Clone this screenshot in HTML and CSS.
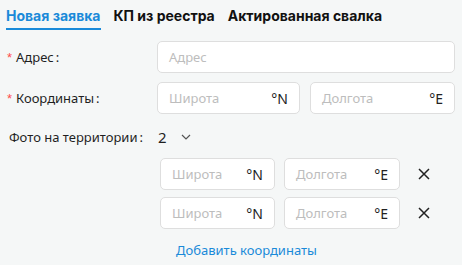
FILE: index.html
```html
<!DOCTYPE html>
<html lang="ru">
<head>
<meta charset="utf-8">
<link rel="stylesheet" href="styles.css">
</head>
<body>
<div class="page">
  <nav class="tabs">
    <span class="tab active">Новая заявка</span>
    <span class="tab">КП из реестра</span>
    <span class="tab">Актированная свалка</span>
  </nav>
  <form class="form">
    <div class="row">
      <label class="label"><span class="req">*</span>Адрес<span class="colon">:</span></label>
      <div class="field wide"><span class="ph">Адрес</span></div>
    </div>
    <div class="row">
      <label class="label"><span class="req">*</span>Координаты<span class="colon">:</span></label>
      <div class="pair">
        <div class="field"><span class="ph">Широта</span><span class="sfx">°N</span></div>
        <div class="field"><span class="ph">Долгота</span><span class="sfx">°E</span></div>
      </div>
    </div>
    <div class="row photo">
      <label class="label plain">Фото на территории<span class="colon">:</span></label>
      <div class="select"><span>2</span>
        <svg width="10" height="6" viewBox="0 0 10 6"><path d="M1 1l4 4 4-4" fill="none" stroke="#555" stroke-width="1.2"/></svg>
      </div>
    </div>
    <div class="sub">
      <div class="subrow">
        <div class="field s1"><span class="ph">Широта</span><span class="sfx">°N</span></div>
        <div class="field s2"><span class="ph">Долгота</span><span class="sfx">°E</span></div>
        <svg class="x" width="12" height="12" viewBox="0 0 12 12"><path d="M1 1l10 10M11 1L1 11" stroke="#222" stroke-width="1.5"/></svg>
      </div>
      <div class="subrow">
        <div class="field s1"><span class="ph">Широта</span><span class="sfx">°N</span></div>
        <div class="field s2"><span class="ph">Долгота</span><span class="sfx">°E</span></div>
        <svg class="x" width="12" height="12" viewBox="0 0 12 12"><path d="M1 1l10 10M11 1L1 11" stroke="#222" stroke-width="1.5"/></svg>
      </div>
      <a class="add">Добавить координаты</a>
    </div>
  </form>
</div>
</body>
</html>
```
FILE: styles.css
```css
html, body { margin: 0; padding: 0; }
body {
  background: #f5f7f7;
  width: 462px;
  height: 265px;
  overflow: hidden;
  font-family: "Noto Sans", "Open Sans", sans-serif;
  color: #1f1f1f;
}
.tabs {
  display: flex;
  gap: 13px;
  padding: 7px 0 0 6px;
  height: 34px;
  box-sizing: border-box;
}
.tab {
  font-family: Inter, Roboto, "Liberation Sans", sans-serif;
  font-weight: 700;
  font-size: 14px;
  color: #111;
  line-height: 18px;
  height: 21px;
}
.tab.active {
  color: #1a8ad9;
  border-bottom: 2px solid #1a8ad9;
}
.form { padding: 7px 7px 0 7px; }
.row {
  display: flex;
  align-items: center;
  height: 32px;
  margin-bottom: 9px;
}
.label {
  width: 150px;
  font-size: 13px;
  color: #1f1f1f;
  flex: none;
}
.colon { margin-left: 2px; }
.label.plain { width: auto; padding-left: 2px; }
.req { color: #ff4d4f; margin-right: 4px; font-family: "Liberation Sans", sans-serif; }
.field {
  background: #fff;
  border: 1px solid #dedede;
  border-radius: 5px;
  height: 32px;
  box-sizing: border-box;
  display: flex;
  align-items: center;
  justify-content: space-between;
  padding: 0 11px;
  font-size: 13px;
}
.wide { width: 298px; }
.pair { display: flex; gap: 10px; }
.pair .field:first-child { width: 143px; }
.pair .field:last-child { width: 145px; }
.ph { color: #bdbdbd; }
.sfx { color: #222; font-size: 14px; }
.photo { height: 30px; margin-bottom: 6px; margin-top: -1px; }
.select {
  margin-left: 15px;
  display: flex;
  align-items: center;
  gap: 14px;
  font-size: 15px;
}
.sub { padding-left: 153px; }
.subrow {
  display: flex;
  align-items: center;
  margin-bottom: 7px;
}
.s1 { width: 115px; }
.s2 { width: 116px; margin-left: 9px; }
.x { margin-left: 18px; }
.add {
  display: block;
  margin: 12px 0 0 16px;
  font-size: 13px;
  color: #1a8ad9;
}
```
